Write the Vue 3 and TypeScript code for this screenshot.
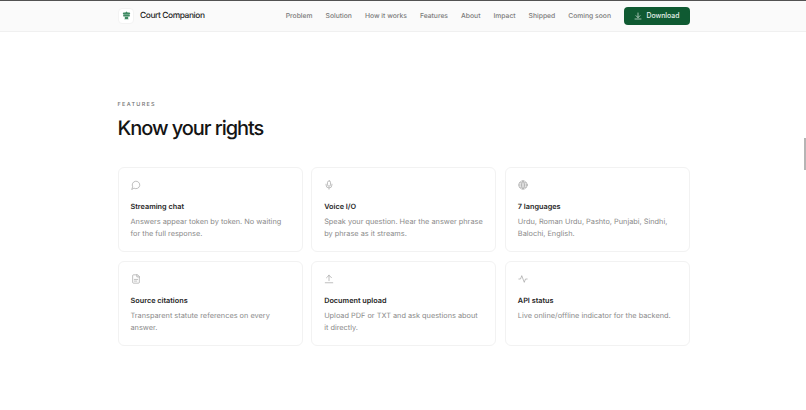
<script setup lang="ts">
const links: string[] = ['Problem', 'Solution', 'How it works', 'Features', 'About', 'Impact', 'Shipped', 'Coming soon']
const features: { title: string; text: string; icon: string }[] = [
  { title: 'Streaming chat', text: 'Answers appear token by token. No waiting for the full response.', icon: 'chat' },
  { title: 'Voice I/O', text: 'Speak your question. Hear the answer phrase by phrase as it streams.', icon: 'mic' },
  { title: '7 languages', text: 'Urdu, Roman Urdu, Pashto, Punjabi, Sindhi, Balochi, English.', icon: 'globe' },
  { title: 'Source citations', text: 'Transparent statute references on every answer.', icon: 'doc' },
  { title: 'Document upload', text: 'Upload PDF or TXT and ask questions about it\u00a0directly.', icon: 'upload' },
  { title: 'API status', text: 'Live online/offline indicator for the backend.', icon: 'pulse' },
]
</script>

<template>
  <div class="page">
    <header class="header">
      <div class="bar">
        <div class="brand">
          <span class="logo">
            <svg viewBox="0 0 24 24" width="9" height="9" fill="#3f8a63">
              <path d="M12 1l3 3h5l2 2-2 4H4L2 6l2-2h5z" />
              <rect x="3" y="10.5" width="18" height="4" rx="1" />
              <path d="M7 15h10l-1 4 2 3H6l2-3z" />
            </svg>
          </span>
          <span class="name">Court Companion</span>
        </div>
        <nav class="nav">
          <a v-for="l in links" :key="l" class="link">{{ l }}</a>
          <button class="dl">
            <svg viewBox="0 0 24 24" width="8" height="8" fill="none" stroke="currentColor" stroke-width="2" stroke-linecap="round" stroke-linejoin="round">
              <path d="M12 3v13M6 11l6 6 6-6M3 21h18" />
            </svg>
            Download
          </button>
        </nav>
      </div>
    </header>

    <main class="main">
      <p class="eyebrow">FEATURES</p>
      <h1 class="title">Know your rights</h1>
      <div class="grid">
        <article v-for="f in features" :key="f.title" class="card">
          <svg class="icon" viewBox="0 0 24 24" width="10" height="10" fill="none" stroke="currentColor" stroke-width="1.5" stroke-linecap="round" stroke-linejoin="round">
            <path v-if="f.icon === 'chat'" d="M7.9 20A9 9 0 1 0 4 16.1L2 22z" />
            <template v-else-if="f.icon === 'mic'">
              <rect x="8.5" y="2" width="7" height="13" rx="3.5" />
              <path d="M19 10v2a7 7 0 0 1-14 0v-2M12 19v3" />
            </template>
            <template v-else-if="f.icon === 'globe'">
              <circle cx="12" cy="12" r="10" />
              <path d="M2 12h20M12 2a15 15 0 0 1 0 20a15 15 0 0 1 0-20M4 7h16M4 17h16" />
            </template>
            <template v-else-if="f.icon === 'doc'">
              <path d="M15 2H6a2 2 0 0 0-2 2v16a2 2 0 0 0 2 2h12a2 2 0 0 0 2-2V7z" />
              <path d="M14 2v5h6M8 13h8M8 17h6" />
            </template>
            <path v-else-if="f.icon === 'upload'" d="M12 16V3M6 9l6-6 6 6M3 21h18" />
            <path v-else d="M22 12h-4l-3 8-6-16-3 8H2" />
          </svg>
          <h3 class="card-title">{{ f.title }}</h3>
          <p class="card-text">{{ f.text }}</p>
        </article>
      </div>
    </main>
    <div class="thumb"></div>
  </div>
</template>

<style scoped>
.page {
  position: relative;
  width: 806px;
  height: 410px;
  overflow: hidden;
  background: #fff;
  font-family: Inter, "Liberation Sans", sans-serif;
  color: #171717;
  text-rendering: geometricPrecision;
}
.header {
  height: 32px;
  box-sizing: border-box;
  background: #fafafa;
  border-top: 1px solid #525252;
  border-bottom: 1px solid #f0f0f0;
}
.bar {
  width: 572px;
  height: 29px;
  margin-left: 118px;
  display: flex;
  align-items: center;
  justify-content: space-between;
}
.brand {
  display: flex;
  align-items: center;
  gap: 6px;
}
.logo {
  width: 16px;
  height: 16px;
  box-sizing: border-box;
  border-radius: 4px;
  background: #fff;
  border: 1px solid #f3f3f3;
  display: flex;
  align-items: center;
  justify-content: center;
}
.name {
  font-size: 8.4px;
  font-weight: 500;
  letter-spacing: -0.4px;
  color: #262626;
}
.nav {
  display: flex;
  align-items: center;
  gap: 13px;
}
.link {
  font-size: 6.78px;
  font-weight: 500;
  color: #7a7a7a;
}
.dl {
  width: 66px;
  height: 18px;
  border: none;
  border-radius: 4px;
  background: #0f5a32;
  color: #e8f2ec;
  font: 500 6.9px Inter, sans-serif;
  display: flex;
  align-items: center;
  justify-content: center;
  gap: 4px;
  padding: 0;
}
.main {
  width: 572.5px;
  margin-left: 117.5px;
  padding-top: 70px;
}
.eyebrow {
  margin: 0;
  font-size: 5.5px;
  line-height: 7px;
  font-weight: 500;
  letter-spacing: 1.3px;
  color: #737373;
}
.title {
  margin: 5px 0 0;
  font-size: 20px;
  line-height: 28px;
  font-weight: 500;
  letter-spacing: -1.05px;
  color: #141414;
}
.grid {
  margin-top: 25px;
  display: grid;
  grid-template-columns: repeat(3, 1fr);
  gap: 9px 8.5px;
}
.card {
  height: 85px;
  box-sizing: border-box;
  padding: 12px 11px 0 12px;
  background: #fff;
  border: 1px solid #f2f2f2;
  border-radius: 6px;
}
.icon {
  display: block;
  color: #999;
}
.card-title {
  margin: 10.5px 0 0;
  font-size: 7.3px;
  line-height: 12px;
  font-weight: 600;
  color: #262626;
}
.card-text {
  margin: 3px 0 0;
  font-size: 7.35px;
  line-height: 12px;
  color: #8a8a8a;
}
.thumb {
  position: absolute;
  right: 0;
  top: 138px;
  width: 2px;
  height: 32px;
  background: #b5b5b5;
}
</style>
